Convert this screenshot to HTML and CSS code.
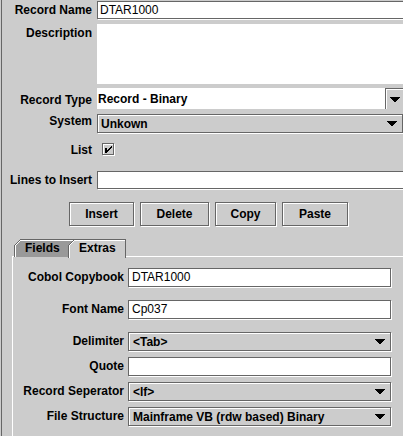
FILE: index.html
```html
<!DOCTYPE html>
<html>
<head>
<meta charset="utf-8">
<title>Record</title>
<link rel="stylesheet" href="styles.css">
</head>
<body>
<div class="frame">
  <div class="row r-name">
    <span class="lbl">Record Name</span>
    <div class="tf main-w">DTAR1000</div>
  </div>
  <div class="row r-desc">
    <span class="lbl lbl-top">Description</span>
    <div class="area main-w"></div>
  </div>
  <div class="row r-type">
    <span class="lbl">Record Type</span>
    <div class="ecombo">
      <span class="etext">Record - Binary</span>
      <span class="abtn"><svg class="arrow" width="10" height="5" viewBox="0 0 10 5"><path d="M0 0h10v1H0zM1 1h8v1H1zM2 2h6v1H2zM3 3h4v1H3zM4 4h2v1H4z"/></svg></span>
    </div>
  </div>
  <div class="row r-sys">
    <span class="lbl">System</span>
    <div class="combo sys-w"><span class="ctext">Unkown</span><svg class="arrow" width="10" height="5" viewBox="0 0 10 5"><path d="M0 0h10v1H0zM1 1h8v1H1zM2 2h6v1H2zM3 3h4v1H3zM4 4h2v1H4z"/></svg></div>
  </div>
  <div class="row r-list">
    <span class="lbl">List</span>
    <span class="check"><svg width="13" height="13" viewBox="0 0 13 13" shape-rendering="crispEdges"><path fill="#fff" d="M1 1h12v1H1zM1 1h1v12H1zM12 1h1v12h-1zM1 12h12v1H1z"/><path fill="#666" d="M0 0h12v1H0zM0 0h1v12H0zM11 0h1v12h-1zM0 11h12v1H0z"/><path fill="#000" d="M3 5h2v5H3zM9 3h1v2H9zM8 4h1v2H8zM7 5h1v2H7zM6 6h1v2H6zM5 7h1v2H5z"/></svg></span>
  </div>
  <div class="row r-lines">
    <span class="lbl">Lines to Insert</span>
    <div class="tf main-w"></div>
  </div>
  <div class="buttons">
    <button class="btn b-insert">Insert</button>
    <button class="btn b-delete">Delete</button>
    <button class="btn b-copy">Copy</button>
    <button class="btn b-paste">Paste</button>
  </div>
  <div class="tabpane">
    <div class="tabs">
      <div class="tab tab-fields">
        <svg class="tabshape" width="54" height="18" viewBox="0 0 54 18" shape-rendering="crispEdges">
          <path fill="#999" d="M6 1h48v17H1V6h1V5h1V4h1V3h1V2h1z"/>
          <path fill="#fff" d="M1 6h1v12H1zM2 5h1v1H2zM3 4h1v1H3zM4 3h1v1H4zM5 2h1v1H5zM6 1h48v1H6z"/>
          <path fill="#666" d="M0 6h1v12H0zM1 5h1v1H1zM2 4h1v1H2zM3 3h1v1H3zM4 2h1v1H4zM5 1h1v1H5zM6 0h48v1H6z"/>
        </svg>
        <span class="tabtext">Fields</span>
      </div>
      <div class="tab tab-extras sel">
        <svg class="tabshape" width="58" height="19" viewBox="0 0 58 19" shape-rendering="crispEdges">
          <path fill="#999" d="M0 1h6v1H5v1H4v1H3v1H2v1H1v1H0z"/>
          <path fill="#fff" d="M0 1h6v1H0z"/>
          <path fill="#666" d="M0 0h6v1H0z"/>
          <path fill="#ccc" d="M6 1h51v18H1V6h1V5h1V4h1V3h1V2h1z"/>
          <path fill="#fff" d="M1 6h1v13H1zM2 5h1v1H2zM3 4h1v1H3zM4 3h1v1H4zM5 2h1v1H5zM6 1h51v1H6z"/>
          <path fill="#666" d="M0 6h1v13H0zM1 5h1v1H1zM2 4h1v1H2zM3 3h1v1H3zM4 2h1v1H4zM5 1h1v1H5zM6 0h52v1H6zM57 1h1v18h-1z"/>
        </svg>
        <span class="tabtext">Extras</span>
      </div>
    </div>
    <div class="content">
      <div class="trow t-first">
        <span class="tlbl">Cobol Copybook</span>
        <div class="tf tab-w tall">DTAR1000</div>
      </div>
      <div class="trow t-gap12">
        <span class="tlbl">Font Name</span>
        <div class="tf tab-w tall">Cp037</div>
      </div>
      <div class="trow t-gap12">
        <span class="tlbl">Delimiter</span>
        <div class="combo tab-w tcombo"><span class="ctext">&lt;Tab&gt;</span><svg class="arrow" width="10" height="5" viewBox="0 0 10 5"><path d="M0 0h10v1H0zM1 1h8v1H1zM2 2h6v1H2zM3 3h4v1H3zM4 4h2v1H4z"/></svg></div>
      </div>
      <div class="trow t-gap5">
        <span class="tlbl">Quote</span>
        <div class="tf tab-w tall"></div>
      </div>
      <div class="trow t-gap5">
        <span class="tlbl">Record Seperator</span>
        <div class="combo tab-w tcombo"><span class="ctext">&lt;lf&gt;</span><svg class="arrow" width="10" height="5" viewBox="0 0 10 5"><path d="M0 0h10v1H0zM1 1h8v1H1zM2 2h6v1H2zM3 3h4v1H3zM4 4h2v1H4z"/></svg></div>
      </div>
      <div class="trow t-gap5">
        <span class="tlbl">File Structure</span>
        <div class="combo tab-w tcombo"><span class="ctext">Mainframe VB (rdw based) Binary</span><svg class="arrow" width="10" height="5" viewBox="0 0 10 5"><path d="M0 0h10v1H0zM1 1h8v1H1zM2 2h6v1H2zM3 3h4v1H3zM4 4h2v1H4z"/></svg></div>
      </div>
    </div>
  </div>
</div>
</body>
</html>
```

FILE: styles.css
```css
html, body {
  margin: 0;
  padding: 0;
  overflow: hidden;
  background: #cccccc;
}

body {
  width: 403px;
  height: 436px;
  font: bold 12px/14px "Liberation Sans", Arial, sans-serif;
  color: #000;
}

.frame {
  margin-left: 1px;
  border-left: 1px solid #666;
  width: 440px;
  height: 436px;
  display: flex;
  flex-direction: column;
}

.row {
  display: flex;
  align-items: center;
  flex: none;
}

.lbl {
  width: 90px;
  margin-right: 5px;
  text-align: right;
  flex: none;
  white-space: nowrap;
}

.lbl-top {
  align-self: flex-start;
  padding-top: 2px;
}

.tf {
  box-sizing: border-box;
  height: 18px;
  border: 1px solid #666;
  box-shadow: 1px 1px 0 #fff;
  background: #fff;
  font-weight: normal;
  padding-left: 2px;
  line-height: 16px;
  white-space: nowrap;
}

.tf.tall {
  height: 19px;
  line-height: 17px;
  padding-left: 3px;
}

.main-w { width: 320px; }

.r-name { height: 19px; }

.r-desc {
  margin-top: 5px;
  height: 60px;
  align-items: stretch;
}

.area { background: #fff; }

.r-type {
  margin-top: 4px;
  height: 21px;
  align-items: stretch;
}

.r-type .lbl {
  padding-top: 2px;
  align-self: center;
}

.ecombo {
  display: flex;
  width: 306px;
}

.etext {
  flex: 1;
  background: #fff;
  line-height: 21px;
  padding: 2px 0 0 1px;
  box-sizing: border-box;
  white-space: nowrap;
  line-height: 19px;
}

.abtn {
  box-sizing: border-box;
  width: 18px;
  border-left: 1px solid #666;
  border-top: 1px solid #666;
  box-shadow: inset 1px 1px 0 #fff;
  background: #ccc;
  display: flex;
  align-items: center;
  justify-content: center;
  padding-left: 1px;
}

.arrow { display: block; flex: none; }

.r-sys {
  margin-top: 5px;
  height: 20px;
  align-items: flex-start;
}

.combo {
  box-sizing: border-box;
  height: 19px;
  border: 1px solid #666;
  box-shadow: inset 1px 1px 0 #fff, 1px 1px 0 #fff;
  background: #ccc;
  display: flex;
  align-items: center;
  justify-content: space-between;
  padding: 0 5px 0 3px;
  white-space: nowrap;
}

.sys-w { width: 306px; }

.r-list {
  margin-top: 9px;
  height: 13px;
}

.check {
  display: block;
  width: 13px;
  height: 13px;
  margin-left: 5px;
}

.check svg { display: block; }

.r-lines {
  margin-top: 15px;
  height: 19px;
  align-items: flex-start;
}

.r-lines .lbl { line-height: 19px; }

.buttons {
  margin-top: 12px;
  padding-left: 67px;
  display: flex;
  gap: 6px;
  height: 25px;
  flex: none;
}

.btn {
  box-sizing: border-box;
  height: 24px;
  border: 1px solid #666;
  box-shadow: inset 1px 1px 0 #fff, 1px 1px 0 #fff;
  background: #ccc;
  font: inherit;
  color: #000;
  padding: 0;
  margin: 0;
  border-radius: 0;
}

.b-insert { width: 65px; }
.b-delete { width: 69px; }
.b-copy { width: 61px; }
.b-paste { width: 66px; }

.tabpane {
  margin-top: 12px;
  margin-left: 10px;
  flex: 1;
  display: flex;
  flex-direction: column;
}

.tabs {
  display: flex;
  height: 18px;
  padding-left: 2px;
  flex: none;
}

.tab {
  position: relative;
  height: 18px;
  flex: none;
}

.tab-fields { width: 54px; }

.tab-extras {
  width: 58px;
  height: 19px;
  z-index: 1;
}

.tabshape {
  position: absolute;
  left: 0;
  top: 0;
}

.tabtext {
  position: relative;
  display: block;
  padding: 2px 0 0 11px;
  line-height: 14px;
}

.content {
  flex: 1;
  margin-top: -1px;
  border-top: 1px solid #fff;
  border-left: 1px solid #fff;
  padding-top: 11px;
}

.trow {
  display: flex;
  align-items: flex-start;
  height: 20px;
}

.t-gap12 { margin-top: 12px; }
.t-gap5 { margin-top: 5px; }

.tlbl {
  width: 111px;
  margin-right: 4px;
  text-align: right;
  white-space: nowrap;
  line-height: 19px;
  flex: none;
}

.tab-w { width: 263px; }

.tcombo { padding: 0 5px 0 4px; }
```
